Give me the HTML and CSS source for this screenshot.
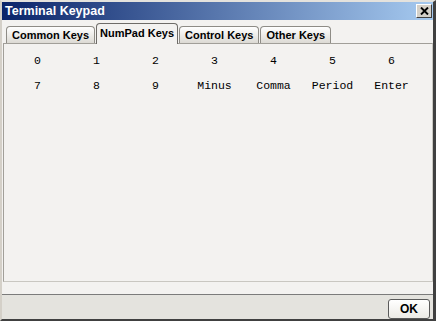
FILE: index.html
```html
<!DOCTYPE html>
<html lang="en">
<head>
    <meta charset="UTF-8">
    <title>Terminal Keypad</title>
    <link rel="stylesheet" href="styles.css">
</head>
<body>
    <div class="window">
        <div class="titlebar">
            <span class="title">Terminal Keypad</span>
            <button class="close" aria-label="Close">
                <svg width="9" height="8" viewBox="0 0 9 8"><path d="M1 0.5 L8 7.5 M8 0.5 L1 7.5" stroke="#000" stroke-width="1.9" fill="none"/></svg>
            </button>
        </div>
        <div class="content">
            <div class="tabs">
                <div class="tab">Common Keys</div>
                <div class="tab active">NumPad Keys</div>
                <div class="tab">Control Keys</div>
                <div class="tab">Other Keys</div>
            </div>
            <div class="panel">
                <div class="keys">
                    <span>0</span><span>1</span><span>2</span><span>3</span><span>4</span><span>5</span><span>6</span>
                    <span>7</span><span>8</span><span>9</span><span>Minus</span><span>Comma</span><span>Period</span><span>Enter</span>
                </div>
            </div>
        </div>
        <div class="footer">
            <button class="ok">OK</button>
        </div>
    </div>
</body>
</html>
```

FILE: styles.css
```css
body {
    margin: 0;
    background: #f3f2f0;
    font-family: "Liberation Sans", Arial, sans-serif;
}
.window {
    width: 436px;
    height: 321px;
    box-sizing: border-box;
    border-style: solid;
    border-width: 2px 3px 2px 2px;
    border-color: #e4e2dd #404040 #404040 #d4d0c8;
    display: flex;
    flex-direction: column;
    background: #f3f2f0;
}
.titlebar {
    height: 18px;
    display: flex;
    align-items: center;
    justify-content: space-between;
    padding: 0 1px 0 3px;
    background: linear-gradient(to right, #0a246a, #a6caf0);
}
.title {
    color: white;
    font-weight: bold;
    font-size: 12.5px;
    padding-top: 1px;
}
.close {
    width: 16px;
    height: 14px;
    padding: 0;
    box-sizing: border-box;
    background: #d4d0c8;
    border: 1px solid;
    border-color: #ffffff #404040 #404040 #ffffff;
    display: flex;
    align-items: center;
    justify-content: center;
}
.content {
    padding-left: 1px;
    height: 270px;
    display: flex;
    flex-direction: column;
}
.tabs {
    height: 23px;
    display: flex;
    align-items: flex-end;
    padding-left: 3px;
    position: relative;
    z-index: 1;
}
.tab {
    height: 16px;
    line-height: 16px;
    padding: 0 5px;
    margin-right: 1px;
    font-size: 11px;
    font-weight: bold;
    color: #000;
    border: 1px solid #8e8c86;
    border-bottom: none;
    border-radius: 4px 4px 0 0;
    background: linear-gradient(#ffffff, #dcdad4);
}
.tab.active {
    height: 20px;
    line-height: 19px;
    margin-bottom: -1px;
    padding: 0 3px;
    background: #f3f2f0;
    border-color: #6e6c68;
}
.panel {
    height: 239px;
    box-sizing: border-box;
    border: 1px solid;
    border-color: #a19f99 #c9c7c1 #c9c7c1 #a19f99;
    background: #f3f2f0;
}
.keys {
    display: grid;
    grid-template-columns: repeat(7, 59px);
    row-gap: 11px;
    padding: 10px 0 0 4px;
    font-family: "Liberation Mono", "Courier New", monospace;
    font-size: 11.5px;
    line-height: 14px;
    color: #000;
    text-align: center;
}
.footer {
    margin-top: 8px;
    border-top: 1px solid #7b7b7b;
    flex: 1;
    background: #e4e3de;
    display: flex;
    justify-content: flex-end;
    align-items: flex-start;
    padding: 4px 3px 0 0;
}
.ok {
    width: 42px;
    height: 20px;
    padding: 0;
    font-family: "Liberation Sans", Arial, sans-serif;
    font-size: 12px;
    font-weight: bold;
    color: #000;
    border: 1px solid #5a5a5a;
    border-radius: 3px;
    background: linear-gradient(#ffffff, #ecebe6);
}
```
